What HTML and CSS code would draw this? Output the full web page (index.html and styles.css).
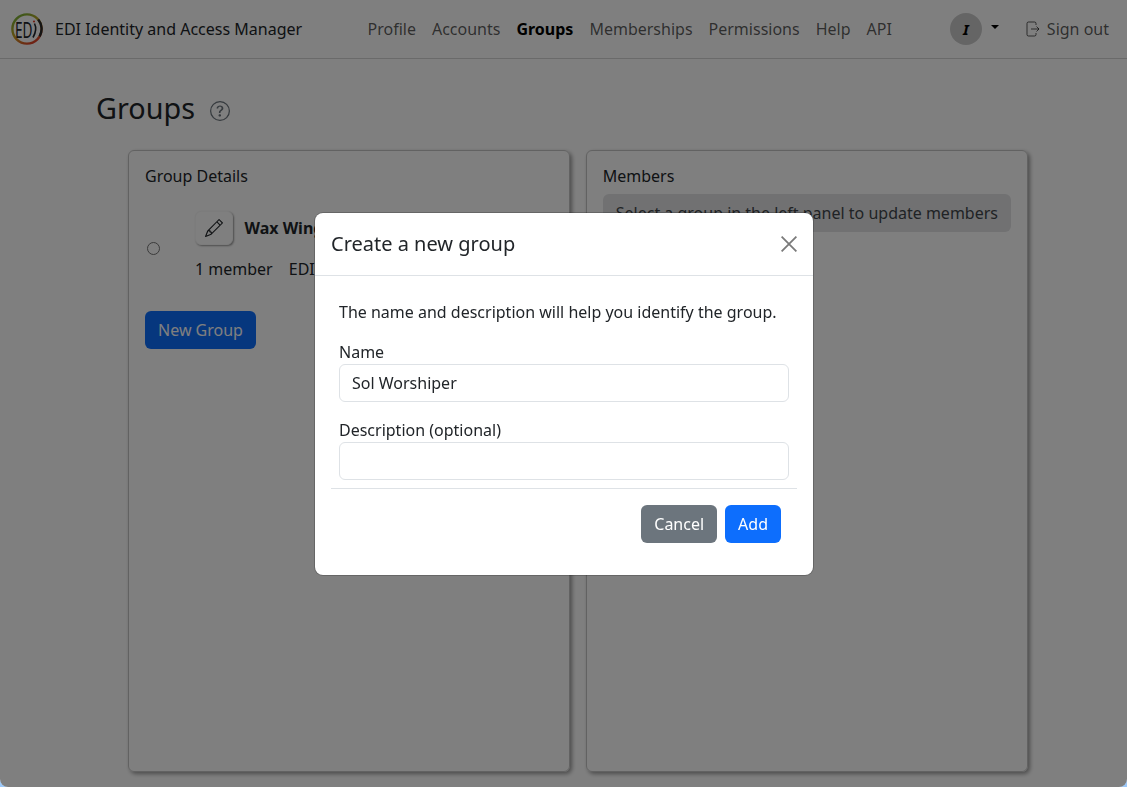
FILE: index.html
```html
<!DOCTYPE html>
<html lang="en">
<head>
  <meta charset="UTF-8" />
  <meta name="viewport" content="width=device-width, initial-scale=1.0"/>
  <title>Groups - EDI Identity and Access Manager</title>
  <link rel="stylesheet" href="styles.css">
</head>
<body>

  <header class="navbar">
    <a class="brand" href="#">
      <svg class="brand-logo" viewBox="0 0 32 32" width="32" height="32">
        <defs>
          <linearGradient id="ringColor" x1="0.1" y1="0" x2="0.7" y2="1">
            <stop offset="0" stop-color="#6fb33a"/>
            <stop offset="0.55" stop-color="#c8a020"/>
            <stop offset="1" stop-color="#e0402a"/>
          </linearGradient>
        </defs>
        <circle cx="16" cy="16" r="14.6" fill="none" stroke="url(#ringColor)" stroke-width="2.4"/>
        <path d="M27.200 6.600A14.600 14.600 0 0 1 28.600 23.300" fill="none" stroke="#2a2a2a" stroke-width="2.4"/>
        <text class="brand-mark" x="4" y="24.500" textLength="17.500" lengthAdjust="spacingAndGlyphs">ED</text>
        <path d="M23.500 10.500Q26.500 16.500 22 24.500" fill="none" stroke="#212529" stroke-width="1.600"/>
        <circle cx="23" cy="8.500" r="1.100" fill="#e0402a"/>
      </svg>
      <span>EDI Identity and Access Manager</span>
    </a>
    <nav class="nav-links">
      <a href="#">Profile</a>
      <a href="#">Accounts</a>
      <a class="active" href="#">Groups</a>
      <a href="#">Memberships</a>
      <a href="#">Permissions</a>
      <a href="#">Help</a>
      <a href="#">API</a>
    </nav>
    <div class="user-menu">
      <span class="avatar">I</span>
      <span class="caret"></span>
    </div>
    <a class="sign-out" href="#">
      <svg viewBox="0 0 14 16" width="14" height="16" fill="none" stroke="currentColor">
        <path d="M10 4V2.500A1.500 1.500 0 0 0 8.500 1H2.500A1.500 1.500 0 0 0 1 2.500V13.500A1.500 1.500 0 0 0 2.500 15H8.500A1.500 1.500 0 0 0 10 13.500V12"/>
        <path d="M5 8H13M10.500 5.500 13 8 10.500 10.500"/>
      </svg>
      Sign out
    </a>
  </header>

  <main class="page">
    <div class="page-title">
      <h1>Groups</h1>
      <svg class="help-icon" viewBox="0 0 16 16" width="20" height="20" fill="currentColor">
        <path d="M8 15A7 7 0 1 1 8 1a7 7 0 0 1 0 14zm0 1A8 8 0 1 0 8 0a8 8 0 0 0 0 16z"/>
        <path d="M5.255 5.786a.237.237 0 0 0 .241.247h.825c.138 0 .248-.113.266-.25.09-.656.54-1.134 1.342-1.134.686 0 1.314.343 1.314 1.168 0 .635-.374.927-.965 1.371-.673.489-1.206 1.06-1.168 1.987l.003.217a.25.25 0 0 0 .25.246h.811a.25.25 0 0 0 .25-.25v-.105c0-.718.273-.927 1.01-1.486.609-.463 1.244-.977 1.244-2.056 0-1.511-1.276-2.241-2.673-2.241-1.267 0-2.655.59-2.75 2.286zm1.557 5.763c0 .533.425.927 1.01.927.609 0 1.028-.394 1.028-.927 0-.552-.42-.94-1.029-.94-.584 0-1.009.388-1.009.94z"/>
      </svg>
    </div>

    <div class="panels">
      <section class="panel">
        <h2>Group Details</h2>
        <div class="group-row">
          <input class="group-radio" type="radio" name="group" />
          <div class="group-info">
            <div class="group-name">
              <button class="edit-btn">
                <svg viewBox="0 0 16 16" width="18" height="18" fill="currentColor">
                  <path d="M12.146.146a.5.5 0 0 1 .708 0l3 3a.5.5 0 0 1 0 .708l-10 10a.5.5 0 0 1-.168.11l-5 2a.5.5 0 0 1-.65-.65l2-5a.5.5 0 0 1 .11-.168l10-10zM11.207 2.5 13.5 4.793 14.793 3.5 12.5 1.207 11.207 2.5zm1.586 3L10.5 3.207 4 9.707V10h.5a.5.5 0 0 1 .5.5v.5h.5a.5.5 0 0 1 .5.5v.5h.293l6.5-6.5zm-9.761 5.175-.106.106-1.528 3.821 3.821-1.528.106-.106A.5.5 0 0 1 5 12.5V12h-.5a.5.5 0 0 1-.5-.5V11h-.5a.5.5 0 0 1-.468-.325z"/>
                </svg>
              </button>
              <strong>Wax Wing</strong>
            </div>
            <div class="group-meta">
              <span>1 member</span>
              <span>EDI</span>
            </div>
          </div>
        </div>
        <button class="btn btn-primary new-group">New Group</button>
      </section>

      <section class="panel">
        <h2>Members</h2>
        <div class="notice">Select a group in the left panel to update members</div>
      </section>
    </div>
  </main>

  <div class="backdrop">
    <div class="modal">
      <div class="modal-header">
        <h3>Create a new group</h3>
        <button class="close-btn" aria-label="Close">
          <svg viewBox="0 0 16 16" width="16" height="16">
            <path d="M0.6 0.6 15.4 15.4M15.4 0.6 0.6 15.4" stroke="currentColor" stroke-width="1.8" fill="none"/>
          </svg>
        </button>
      </div>
      <form class="modal-body">
        <div class="modal-fields">
          <p>The name and description will help you identify the group.</p>
          <label for="groupName">Name</label>
          <input id="groupName" class="field name-field" type="text" value="Sol Worshiper" />
          <label for="groupDescription">Description (optional)</label>
          <input id="groupDescription" class="field" type="text" />
        </div>
        <div class="modal-actions">
          <button class="btn btn-secondary" type="button">Cancel</button>
          <button class="btn btn-primary" type="button">Add</button>
        </div>
      </form>
    </div>
  </div>

</body>
</html>
```

FILE: styles.css
```css
* {
  margin: 0;
  padding: 0;
  box-sizing: border-box;
  font-family: 'Noto Sans', sans-serif;
}

html {
  background-color: #9cc8f8;
}

body {
  background-color: white;
  color: #212529;
  font-size: 16px;
  height: 787px;
  overflow: hidden;
  border-radius: 0 0 8px 8px;
}

a {
  text-decoration: none;
}

.navbar {
  display: flex;
  align-items: center;
  height: 59px;
  padding: 0 18px 0 11px;
  border-bottom: 1px solid #d5d5d5;
}

.brand {
  display: flex;
  align-items: center;
  gap: 12px;
  color: #212529;
}

.brand-mark {
  font-size: 22px;
  fill: #212529;
}

.nav-links {
  display: flex;
  gap: 16px;
  margin-left: 65.4px;
}

.nav-links a {
  color: rgba(0, 0, 0, 0.65);
}

.nav-links a.active {
  color: black;
  font-weight: bold;
}

.user-menu {
  display: flex;
  align-items: center;
  gap: 9px;
  margin-left: auto;
}

.avatar {
  display: flex;
  align-items: center;
  justify-content: center;
  width: 32px;
  height: 32px;
  border-radius: 50%;
  background-color: #cbcbcb;
  color: black;
  font-weight: bold;
  font-style: italic;
  font-size: 15px;
}

.caret {
  width: 0;
  height: 0;
  margin-bottom: 4px;
  border-top: 4px solid black;
  border-left: 4px solid transparent;
  border-right: 4px solid transparent;
}

.sign-out {
  display: flex;
  align-items: center;
  gap: 7px;
  margin-left: 27px;
  color: rgba(0, 0, 0, 0.65);
}

.page {
  padding: 0 96px;
}

.page-title {
  display: flex;
  align-items: center;
  gap: 15px;
  height: 91px;
  padding-top: 5px;
}

.page-title h1 {
  font-size: 28.8px;
  font-weight: normal;
}

.help-icon {
  color: #6c757d;
  margin-top: 8px;
}

.panels {
  display: grid;
  grid-template-columns: 1fr 1fr;
  gap: 16px;
  width: 900px;
  margin-left: 32px;
}

.panel {
  height: 622px;
  padding: 14px 16px;
  border: 1px solid #c4c4c4;
  border-radius: 6px;
  box-shadow: 2px 2px 4px rgba(0, 0, 0, 0.4);
}

.panel h2 {
  font-size: 16px;
  font-weight: normal;
  line-height: 22px;
  margin-bottom: 7px;
}

.group-row {
  display: flex;
  align-items: center;
  gap: 35px;
  margin-top: 24px;
}

.group-radio {
  width: 13px;
  height: 13px;
  margin-left: 2px;
  margin-top: 6px;
}

.group-name {
  display: flex;
  align-items: center;
  gap: 11.5px;
}

.edit-btn {
  display: flex;
  align-items: center;
  justify-content: center;
  width: 38px;
  height: 34px;
  background-color: white;
  border: 1px solid #f8f8f8;
  border-radius: 6px;
  box-shadow: 1px 1px 2px rgba(0, 0, 0, 0.4);
  color: #212529;
}

.group-meta {
  display: flex;
  gap: 16px;
  margin-top: 13px;
}

.btn {
  padding: 0 13px;
  height: 38px;
  border: none;
  border-radius: 6px;
  font-size: 16px;
  color: white;
}

.btn-primary {
  background-color: #0d6efd;
}

.btn-secondary {
  background-color: #6c757d;
}

.new-group {
  width: 111px;
  margin-top: 31px;
}

.notice {
  height: 38px;
  padding: 0 13px;
  line-height: 38px;
  white-space: nowrap;
  background-color: #e2e3e5;
  border-radius: 6px;
  color: #41464b;
}

.backdrop {
  position: fixed;
  top: 0;
  left: 0;
  width: 100%;
  height: 100%;
  display: flex;
  align-items: center;
  justify-content: center;
  background-color: rgba(0, 0, 0, 0.5);
  border-radius: 0 0 8px 8px;
}

.modal {
  width: 498px;
  margin-left: 1px;
  background-color: white;
  border-radius: 8px;
  box-shadow: 0 0 0 1px rgba(0, 0, 0, 0.2);
}

.modal-header {
  display: flex;
  align-items: center;
  justify-content: space-between;
  height: 63px;
  padding: 0 16px;
  border-bottom: 1px solid #dee2e6;
}

.modal-header h3 {
  font-size: 20px;
  font-weight: normal;
}

.close-btn {
  display: flex;
  background: none;
  border: none;
  color: #7a7a7a;
}

.modal-body {
  padding: 0 16px 32px;
}

.modal-fields {
  padding: 24px 8px 8px;
  border-bottom: 1px solid #dee2e6;
}

.modal-fields p {
  line-height: 24px;
  margin-bottom: 16px;
}

.modal-fields label {
  display: block;
  line-height: 24px;
}

.field {
  display: block;
  width: 100%;
  height: 38px;
  padding: 0 12px;
  border: 1px solid #dee2e6;
  border-radius: 6px;
  font-size: 16px;
  color: #212529;
}

.name-field {
  margin-bottom: 16px;
}

.modal-actions {
  display: flex;
  justify-content: flex-end;
  gap: 8px;
  padding: 16px 16px 0;
}
```
